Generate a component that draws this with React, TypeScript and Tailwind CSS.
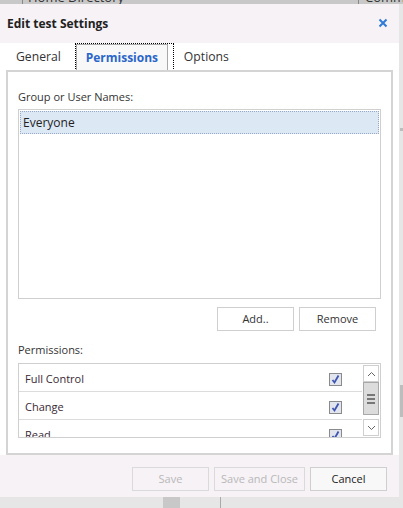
import React from "react";

function Check() {
  return (
    <div className="w-[13px] h-[13px] border border-[#8a8a8a] bg-[#e2e4ee] flex items-center justify-center">
      <svg width="11" height="11" viewBox="0 0 11 11">
        <path d="M2.5 6 L4.5 8.5 L8.5 1.5" fill="none" stroke="#3d56b0" strokeWidth="1.8" />
      </svg>
    </div>
  );
}

function PermRow({ label }: { label: string }) {
  return (
    <div className="h-[28px] flex items-center border-b border-[#dcdcdc] pl-[6px] pr-[20px] pt-[3px] shrink-0">
      <span className="flex-1 text-[11px] text-[#3a2a35]">{label}</span>
      <Check />
    </div>
  );
}

export default function App() {
  return (
    <div
      className="relative w-[403px] h-[508px] overflow-hidden bg-[#e6e6e6]"
      style={{ fontFamily: '"Open Sans", "Noto Sans", sans-serif' }}
    >
      {/* background page behind the modal */}
      <div className="h-[4px] bg-[#c8c8c8] relative overflow-visible">
        <span className="absolute left-[28px] top-[-10px] text-[13px] text-[#333] leading-[14px]">Home Directory</span>
        <span className="absolute left-[365px] top-[-10px] text-[13px] text-[#333] leading-[14px]">Comme</span>
        <div className="absolute left-[22px] top-0 w-px h-[4px] bg-[#888]" />
        <div className="absolute left-[358px] top-0 w-px h-[4px] bg-[#888]" />
      </div>
      <div className="absolute right-0 top-[128px] w-[3px] h-[3px] bg-[#bdbdbd]" />
      <div className="absolute right-0 top-[385px] w-[3px] h-[32px] bg-[#bdbdbd]" />
      <div className="absolute left-[163px] top-[497px] w-[17px] h-[11px] bg-[#c8c8c8]" />
      <div className="absolute left-[220px] top-[497px] w-[1px] h-[11px] bg-[#aaa]" />

      {/* dialog */}
      <div className="absolute left-0 top-[4px] w-[399px] h-[493px] bg-white flex flex-col">
        {/* header */}
        <div className="h-[39px] bg-[#f6f2f6] flex items-center pl-[7px] pr-[11px] shrink-0">
          <span className="flex-1 text-[12px] font-bold text-[#222]">Edit test Settings</span>
          <svg width="10" height="10" viewBox="0 0 10 10" className="mb-[2px]">
            <path d="M1.5 1.5 L8.5 8.5 M8.5 1.5 L1.5 8.5" stroke="#2f7bd6" strokeWidth="2" />
          </svg>
        </div>

        {/* tabs */}
        <div className="h-[27px] flex items-end pl-[16px] shrink-0">
          <span className="text-[12.2px] text-[#333] h-[26px] flex items-center">General</span>
          <div className="ml-[14px] h-[28px] border border-dotted border-black flex items-end pr-[5px] mb-[-1px]">
            <div className="h-[26px] w-[92px] border border-b-0 border-[#a8a8a8] bg-[#f8f8f8] flex items-center justify-center">
              <span className="text-[12px] font-bold text-[#2a66c9]">Permissions</span>
            </div>
          </div>
          <span className="ml-[10px] text-[12.2px] text-[#333] h-[26px] flex items-center">Options</span>
        </div>

        {/* content panel */}
        <div className="mx-[6px] h-[385px] border-2 border-[#d4d4d4] flex flex-col px-[10px] shrink-0">
          <div className="mt-[17px] text-[11px] text-[#333] leading-[16px]">Group or User Names:</div>
          <div className="mt-[4px] h-[190px] border border-[#cfcfcf] p-px">
            <div className="h-[23px] bg-[#dde8f5] border border-dotted border-[#9aa8c8] flex items-center pl-[2px]">
              <span className="text-[12px] text-[#222]">Everyone</span>
            </div>
          </div>
          <div className="mt-[8px] flex justify-end gap-[5px] pr-[5px]">
            <button className="w-[77px] h-[24px] border border-[#cfcfcf] bg-white text-[11px] text-[#333]">Add..</button>
            <button className="w-[77px] h-[24px] border border-[#cfcfcf] bg-white text-[11px] text-[#333]">Remove</button>
          </div>
          <div className="mt-[11px] text-[11px] text-[#333] leading-[16px]">Permissions:</div>
          <div className="mt-[5px] h-[75px] border border-[#cfcfcf] flex overflow-hidden">
            <div className="flex-1 flex flex-col overflow-hidden">
              <PermRow label="Full Control" />
              <PermRow label="Change" />
              <PermRow label="Read" />
            </div>
            <div className="w-[18px] flex flex-col shrink-0 p-px">
              <div className="h-[17px] flex items-center justify-center bg-white border border-[#cfcfcf]">
                <svg width="9" height="6" viewBox="0 0 9 6">
                  <path d="M1 5 L4.5 1.5 L8 5" fill="none" stroke="#666" strokeWidth="1" />
                </svg>
              </div>
              <div className="h-[33px] bg-[#dcdcdc] border border-[#a8a8a8] flex flex-col items-center justify-center gap-[2px]">
                <div className="w-[8px] h-[2px] bg-[#777]" />
                <div className="w-[8px] h-[2px] bg-[#777]" />
                <div className="w-[8px] h-[2px] bg-[#777]" />
              </div>
              <div className="flex-1" />
              <div className="h-[17px] flex items-center justify-center border border-[#cfcfcf]">
                <svg width="9" height="6" viewBox="0 0 9 6">
                  <path d="M1 1 L4.5 4.5 L8 1" fill="none" stroke="#666" strokeWidth="1" />
                </svg>
              </div>
            </div>
          </div>
        </div>

        {/* footer */}
        <div className="flex-1 bg-[#f6f2f6] flex justify-end items-start pt-[12px] pr-[12px] gap-[5px]">
          <button className="w-[77px] h-[24px] border border-[#dadada] text-[11px] text-[#b8b8b8]">Save</button>
          <button className="w-[91px] h-[24px] border border-[#dadada] text-[11px] text-[#b8b8b8]">Save and Close</button>
          <button className="w-[77px] h-[24px] border border-[#cfcfcf] bg-[#f8f8f8] text-[11px] text-[#222]">Cancel</button>
        </div>
      </div>
    </div>
  );
}
